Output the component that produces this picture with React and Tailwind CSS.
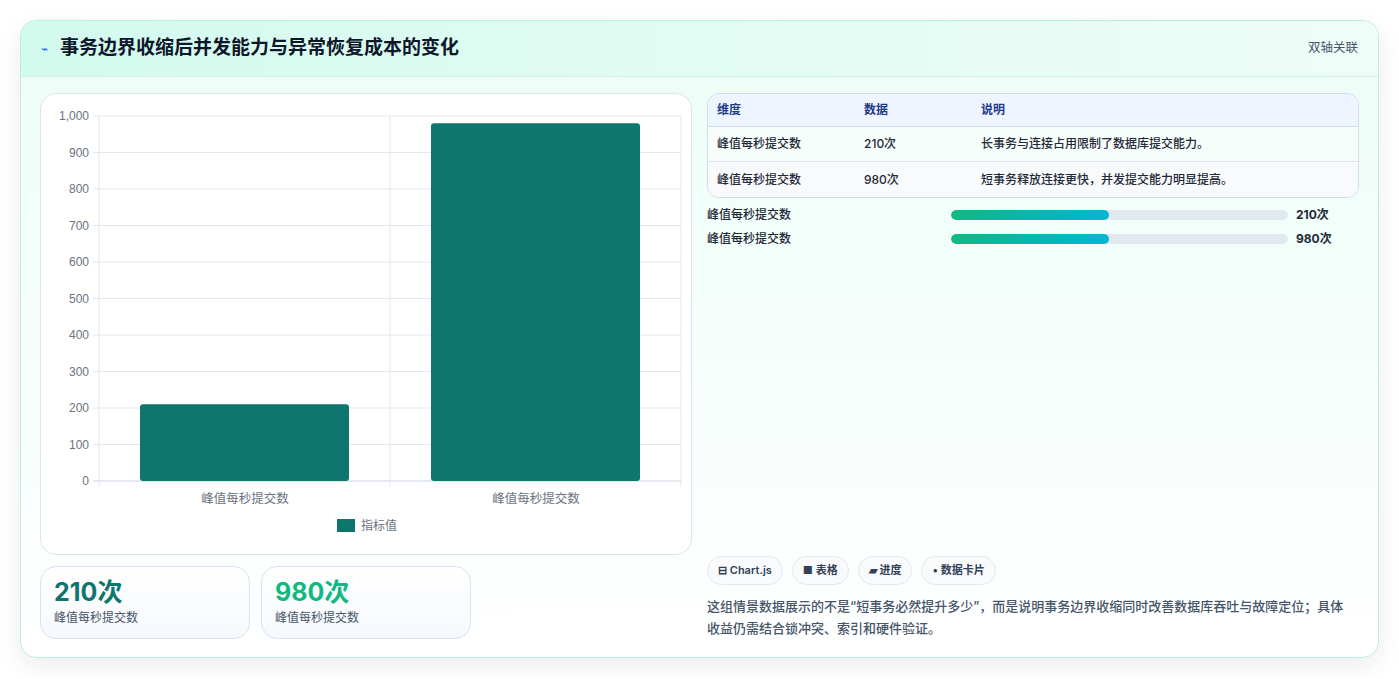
import React from 'react';

const ticks = [0, 100, 200, 300, 400, 500, 600, 700, 800, 900, 1000];
const rows = [
    { dim: '峰值每秒提交数', val: '210次', note: '长事务与连接占用限制了数据库提交能力。' },
    { dim: '峰值每秒提交数', val: '980次', note: '短事务释放连接更快，并发提交能力明显提高。' },
];

function BarChart() {
    const L = 58, T = 22, R = 640, B = 387;
    const y = (v) => B - ((B - T) * v) / 1000;
    return (
        <svg width="652" height="461" className="block">
            {ticks.map((t) => (
                <g key={t}>
                    <line x1={L - 6} x2={R} y1={y(t)} y2={y(t)} stroke={t === 0 ? '#cbd5e1' : '#e5e7eb'} />
                    <text x={L - 10} y={y(t) + 4} textAnchor="end" fontSize="12" fill="#6b7280" fontFamily="Liberation Sans, sans-serif">
                        {t === 1000 ? '1,000' : t}
                    </text>
                </g>
            ))}
            <line x1={L} x2={L} y1={T} y2={B + 6} stroke="#e5e7eb" />
            <line x1={349} x2={349} y1={T} y2={B + 6} stroke="#e5e7eb" />
            <line x1={R} x2={R} y1={T} y2={B + 6} stroke="#e5e7eb" />
            <rect x="99" y={y(210)} width="209" height={B - y(210)} rx="3" fill="#0f766e" />
            <rect x="390" y={y(980)} width="209" height={B - y(980)} rx="3" fill="#0f766e" />
            <text x="204" y="409" textAnchor="middle" fontSize="12.5" fill="#6b7280" fontFamily="Noto Sans CJK SC, sans-serif">峰值每秒提交数</text>
            <text x="495" y="409" textAnchor="middle" fontSize="12.5" fill="#6b7280" fontFamily="Noto Sans CJK SC, sans-serif">峰值每秒提交数</text>
            <rect x="296" y="425" width="18" height="13" fill="#0f766e" />
            <text x="320" y="436" fontSize="12" fill="#6b7280" fontFamily="Noto Sans CJK SC, sans-serif">指标值</text>
        </svg>
    );
}

export default function App() {
    return (
        <div className="min-h-[679px] bg-white p-5" style={{ fontFamily: 'Inter, "Noto Sans CJK SC", sans-serif' }}>
            <div className="rounded-2xl border border-[#bdeee0] bg-gradient-to-b from-[#ecfdf6] to-[#ffffff] shadow-[0_8px_24px_rgba(15,23,42,0.08)] overflow-hidden">
                <div className="h-[56px] flex items-center justify-between px-5 bg-gradient-to-r from-[#d3faee] to-[#eefdf8] border-b border-[#d2f1e8]">
                    <div className="flex items-center gap-3">
                        <span className="text-[#2563eb] text-xs">⌁</span>
                        <h1 className="text-[19px] font-bold text-[#0f172a]">事务边界收缩后并发能力与异常恢复成本的变化</h1>
                    </div>
                    <span className="text-[12.5px] text-[#475569]">双轴关联</span>
                </div>
                <div className="flex gap-[15px] px-[19px] pt-[16px] pb-[18px]">
                    <div className="w-[652px] flex flex-col gap-[11px]">
                        <div className="h-[462px] rounded-2xl border border-[#dbe5ef] bg-white">
                            <BarChart />
                        </div>
                        <div className="flex gap-[11px]">
                            {[['210次', 'text-[#0f766e]'], ['980次', 'text-[#10b981]']].map(([v, c], i) => (
                                <div key={i} className="w-[210px] h-[73px] rounded-2xl border border-[#d6e4f2] bg-gradient-to-b from-[#ffffff] to-[#f6f9fd] px-[13px] pt-[8px]">
                                    <div className={`text-[25px] font-bold leading-[34px] ${c}`}>{v}</div>
                                    <div className="text-[12px] text-[#475569]">峰值每秒提交数</div>
                                </div>
                            ))}
                        </div>
                    </div>
                    <div className="flex-1 flex flex-col">
                        <div className="rounded-xl border border-[#cfdcec] overflow-hidden text-[12px] bg-white">
                            <div className="flex h-[33px] items-center bg-[#eef5fe] border-b border-[#cfdcec] font-semibold text-[#1e3a8a]">
                                <span className="w-[156px] pl-[9px]">维度</span>
                                <span className="w-[117px]">数据</span>
                                <span>说明</span>
                            </div>
                            {rows.map((r, i) => (
                                <div key={i} className={`flex h-[35px] items-center text-[#1f2937] font-medium ${i === 0 ? 'bg-[#f6fdfa] border-b border-[#dde6f0]' : 'bg-[#f8fafc]'}`}>
                                    <span className="w-[156px] pl-[9px]">{r.dim}</span>
                                    <span className="w-[117px]">{r.val}</span>
                                    <span>{r.note}</span>
                                </div>
                            ))}
                        </div>
                        <div className="mt-[10px] flex flex-col gap-[10px]">
                            {rows.map((r, i) => (
                                <div key={i} className="flex items-center h-[14px] text-[12px] font-medium text-[#1f2937]">
                                    <span className="w-[244px]">{r.dim}</span>
                                    <div className="w-[337px] h-[10px] rounded-full bg-[#e2e8f0] overflow-hidden">
                                        <div className="h-full w-[158px] rounded-full bg-gradient-to-r from-[#10b981] to-[#06b6d4]" />
                                    </div>
                                    <span className="ml-2 font-bold">{r.val}</span>
                                </div>
                            ))}
                        </div>
                        <div className="flex-1" />
                        <div className="flex gap-[9px] text-[11px] font-semibold text-[#334155]">
                            {['⊟ Chart.js', '■ 表格', '▰ 进度', '• 数据卡片'].map((t) => (
                                <span key={t} className="h-[29px] px-[10px] flex items-center rounded-full border border-[#e2e8f0] bg-[#f8fafc]">{t}</span>
                            ))}
                        </div>
                        <p className="mt-[10px] text-[13px] leading-[22px] font-medium text-[#475569] pr-1">
                            这组情景数据展示的不是“短事务必然提升多少”，而是说明事务边界收缩同时改善数据库吞吐与故障定位；具体收益仍需结合锁冲突、索引和硬件验证。
                        </p>
                    </div>
                </div>
            </div>
        </div>
    );
}
